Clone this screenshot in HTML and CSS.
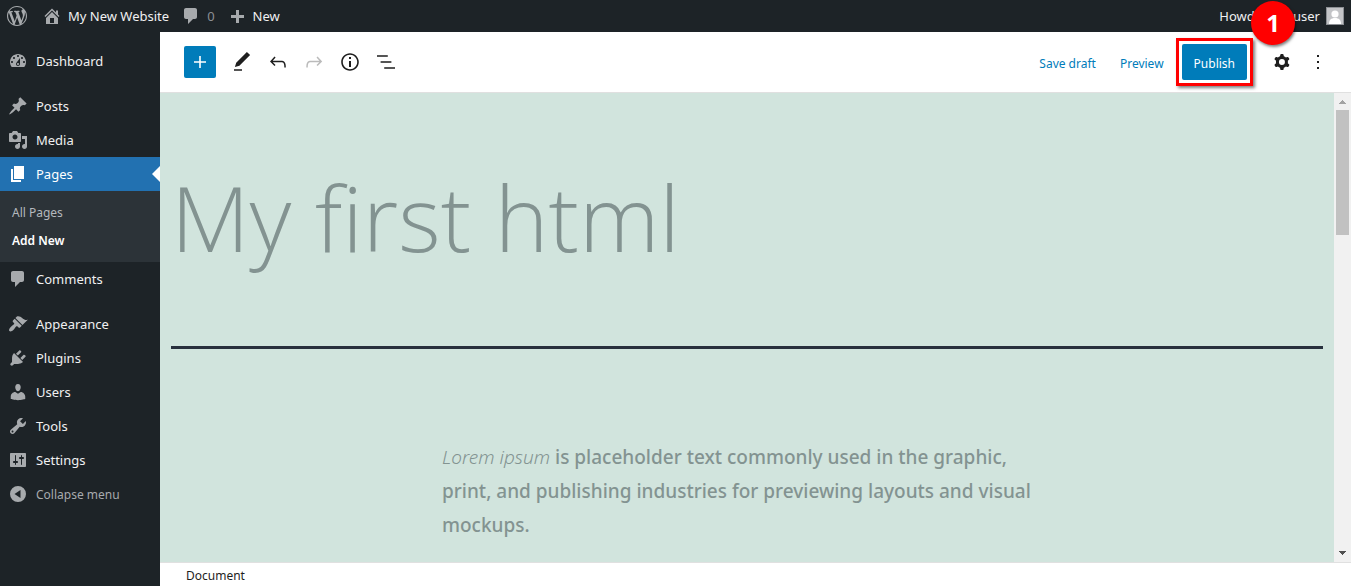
FILE: index.html
```
<!DOCTYPE html>
<html lang="en">
<head>
  <meta charset="UTF-8" />
  <meta name="viewport" content="width=device-width, initial-scale=1.0" />
  <title>Add New Page - My New Website</title>
  <link rel="stylesheet" href="styles.css">
</head>
<body>
  <header class="adminbar">
    <a href="#" class="bar-item" aria-label="About WordPress">
      <svg class="icon" viewBox="0 0 20 20"><path d="M20 10c0-5.51-4.49-10-10-10C4.48 0 0 4.49 0 10c0 5.52 4.48 10 10 10 5.51 0 10-4.48 10-10zM7.78 15.37L4.37 6.22c.55-.02 1.17-.08 1.17-.08.5-.06.44-1.13-.06-1.11 0 0-1.45.11-2.37.11-.18 0-.37 0-.58-.01C4.12 2.69 6.87 1.11 10 1.11c2.33 0 4.45.87 6.05 2.34-.68-.11-1.65.39-1.65 1.58 0 .74.45 1.36.9 2.1.35.61.55 1.36.55 2.46 0 1.49-1.4 5-1.4 5l-3.03-8.37c.54-.02.82-.17.82-.17.5-.05.44-1.25-.06-1.22 0 0-1.44.12-2.38.12-.87 0-2.33-.12-2.33-.12-.5-.03-.56 1.2-.06 1.22l.92.08 1.26 3.41zM17.41 10c.24-.64.74-1.87.43-4.25.7 1.29 1.05 2.71 1.05 4.25 0 3.29-1.73 6.24-4.4 7.78.97-2.59 1.94-5.2 2.92-7.78zM6.1 18.09C3.12 16.65 1.11 13.53 1.11 10c0-1.3.23-2.48.72-3.59C3.25 10.3 4.67 14.2 6.1 18.09zm4.03-6.63l2.58 6.98c-.86.29-1.76.45-2.71.45-.79 0-1.57-.11-2.29-.33.81-2.38 1.62-4.74 2.42-7.1z"/></svg>
    </a>
    <a href="#" class="bar-item">
      <svg class="icon" viewBox="0 0 20 20"><path d="M16 8.5l1.53 1.53-1.06 1.06L10 4.6l-6.47 6.49-1.06-1.06L10 2.5l4 4v-2h2v4zm-6-2.46l6 5.99V18H4v-5.97zM12 17v-5H8v5h4z"/></svg>
      My New Website
    </a>
    <a href="#" class="bar-item muted">
      <svg class="icon" viewBox="0 0 20 20"><path d="M5 2h9c1.1 0 2 .9 2 2v7c0 1.1-.9 2-2 2h-2l-5 5v-5H5c-1.1 0-2-.9-2-2V4c0-1.1.9-2 2-2z"/></svg>
      0
    </a>
    <a href="#" class="bar-item">
      <svg class="icon" viewBox="0 0 20 20"><path d="M17 9v3h-5v5H9v-5H4V9h5V4h3v5h5z"/></svg>
      New
    </a>
    <a href="#" class="bar-item account">
      Howdy, newuser
      <span class="avatar">
        <svg viewBox="0 0 16 16"><circle cx="8" cy="6" r="3.6"/><path d="M2 16c0-4 2-6 6-6s6 2 6 6z"/></svg>
      </span>
    </a>
  </header>

  <div class="layout">
    <nav class="sidebar">
      <a href="#" class="menu-item">
        <svg class="icon" viewBox="0 0 20 20"><path d="M3.76 16h12.48c1.1-1.37 1.76-3.11 1.76-5 0-4.42-3.58-8-8-8s-8 3.58-8 8c0 1.89.66 3.63 1.76 5zM10 4c.55 0 1 .45 1 1s-.45 1-1 1-1-.45-1-1 .45-1 1-1zM6 6c.55 0 1 .45 1 1s-.45 1-1 1-1-.45-1-1 .45-1 1-1zm8 0c.55 0 1 .45 1 1s-.45 1-1 1-1-.45-1-1 .45-1 1-1zm-5.37 5.55L12 7v6c0 1.1-.9 2-2 2s-2-.9-2-2c0-.57.24-1.08.63-1.45zM4 10c.55 0 1 .45 1 1s-.45 1-1 1-1-.45-1-1 .45-1 1-1zm12 0c.55 0 1 .45 1 1s-.45 1-1 1-1-.45-1-1 .45-1 1-1zm-5 3c0-.55-.45-1-1-1s-1 .45-1 1 .45 1 1 1 1-.45 1-1z"/></svg>
        Dashboard
      </a>
      <div class="separator"></div>
      <a href="#" class="menu-item">
        <svg class="icon" viewBox="0 0 20 20"><path d="M10.44 3.02l1.82-1.82 6.36 6.35-1.83 1.82c-1.05-.68-2.48-.57-3.41.36l-.75.75c-.92.93-1.04 2.35-.35 3.41l-1.83 1.82-2.41-2.41-2.8 2.79c-.42.42-3.38 2.71-3.8 2.29s1.86-3.39 2.28-3.81l2.79-2.79L4.1 9.36l1.83-1.82c1.05.69 2.48.57 3.4-.36l.75-.75c.93-.92 1.05-2.35.36-3.41z"/></svg>
        Posts
      </a>
      <a href="#" class="menu-item">
        <svg class="icon" viewBox="0 0 20 20"><path d="M13 11V4c0-.55-.45-1-1-1h-1.67L9 1H5L3.67 3H2c-.55 0-1 .45-1 1v7c0 .55.45 1 1 1h10c.55 0 1-.45 1-1zM7 4.5c1.38 0 2.5 1.12 2.5 2.5S8.38 9.5 7 9.5 4.5 8.38 4.5 7 5.62 4.5 7 4.5zM14 6h5v10.5c0 1.38-1.12 2.5-2.5 2.5S14 17.88 14 16.5s1.12-2.5 2.5-2.5c.17 0 .34.02.5.05V9h-3V6zm-4 8.05V13h2v3.5c0 1.38-1.12 2.5-2.5 2.5S7 17.88 7 16.5 8.12 14 9.5 14c.17 0 .34.02.5.05z"/></svg>
        Media
      </a>
      <a href="#" class="menu-item current">
        <svg class="icon" viewBox="0 0 20 20"><path d="M6 15V2h10v13H6zm-1 1h8v2H3V5h2v11z"/></svg>
        Pages
      </a>
      <div class="submenu">
        <a href="#">All Pages</a>
        <a href="#" class="active">Add New</a>
      </div>
      <a href="#" class="menu-item">
        <svg class="icon" viewBox="0 0 20 20"><path d="M5 2h9c1.1 0 2 .9 2 2v7c0 1.1-.9 2-2 2h-2l-5 5v-5H5c-1.1 0-2-.9-2-2V4c0-1.1.9-2 2-2z"/></svg>
        Comments
      </a>
      <div class="separator"></div>
      <a href="#" class="menu-item">
        <svg class="icon" viewBox="0 0 20 20"><path d="M14.48 11.06L7.41 3.99l1.5-1.5c.5-.56 2.3-.47 3.51.32 1.21.8 1.43 1.28 2.91 2.1 1.18.64 2.45 1.26 4.45.85zm-.71.71L6.7 4.7 4.93 6.47c-.39.39-.39 1.02 0 1.41l1.06 1.06c.39.39.39 1.03 0 1.42-.6.6-1.43 1.11-2.21 1.69-.35.26-.7.53-1.01.84C1.43 14.23.4 16.08 1.4 17.07c.99 1 2.84-.03 4.18-1.36.31-.31.58-.66.85-1.02.57-.78 1.08-1.61 1.69-2.21.39-.39 1.02-.39 1.41 0l1.06 1.06c.39.39 1.02.39 1.41 0z"/></svg>
        Appearance
      </a>
      <a href="#" class="menu-item">
        <svg class="icon" viewBox="0 0 20 20"><path d="M13.11 4.36L9.87 7.6 8 5.73l3.24-3.24c.35-.34 1.05-.2 1.56.32.52.51.66 1.21.31 1.55zm-8 1.77l.91-1.12 9.01 9.01-1.19.84c-.71.71-2.63 1.16-3.82 1.16H6.14L4.9 17.26c-.59.59-1.54.59-2.12 0-.59-.58-.59-1.53 0-2.12l1.24-1.24v-3.88c0-1.13.4-3.19 1.09-3.89zm7.26 3.97l3.24-3.24c.34-.35 1.04-.21 1.55.31.52.51.66 1.21.31 1.55l-3.24 3.25z"/></svg>
        Plugins
      </a>
      <a href="#" class="menu-item">
        <svg class="icon" viewBox="0 0 20 20"><path d="M10 9.25c-2.27 0-2.73-3.44-2.73-3.44C7 4.02 7.82 2 9.97 2c2.16 0 2.98 2.02 2.71 3.81 0 0-.41 3.44-2.68 3.44zm0 2.57L12.72 10c2.39 0 4.52 2.33 4.52 4.53v2.49s-3.65 1.13-7.24 1.13c-3.65 0-7.24-1.13-7.24-1.13v-2.49c0-2.25 1.94-4.48 4.47-4.48z"/></svg>
        Users
      </a>
      <a href="#" class="menu-item">
        <svg class="icon" viewBox="0 0 20 20"><path d="M16.68 9.77c-1.34 1.34-3.3 1.67-4.95.99l-5.41 6.52c-.99.99-2.59.99-3.58 0s-.99-2.59 0-3.57l6.52-5.42c-.68-1.65-.35-3.61.99-4.95 1.28-1.28 3.12-1.62 4.72-1.06l-2.89 2.89 2.82 2.82 2.86-2.87c.53 1.58.18 3.39-1.08 4.65zM3.81 16.21c.4.39 1.04.39 1.43 0 .4-.4.4-1.04 0-1.43-.39-.4-1.03-.4-1.43 0-.39.39-.39 1.03 0 1.43z"/></svg>
        Tools
      </a>
      <a href="#" class="menu-item">
        <svg class="icon" viewBox="0 0 20 20"><path d="M18 16V4c0-.55-.45-1-1-1H3c-.55 0-1 .45-1 1v12c0 .55.45 1 1 1h14c.55 0 1-.45 1-1zM8 11h1c.55 0 1 .45 1 1s-.45 1-1 1H8v1.5c0 .28-.22.5-.5.5s-.5-.22-.5-.5V13H6c-.55 0-1-.45-1-1s.45-1 1-1h1V5.5c0-.28.22-.5.5-.5s.5.22.5.5V11zm5-2h-1c-.55 0-1-.45-1-1s.45-1 1-1h1V5.5c0-.28.22-.5.5-.5s.5.22.5.5V7h1c.55 0 1 .45 1 1s-.45 1-1 1h-1v5.5c0 .28-.22.5-.5.5s-.5-.22-.5-.5V9z"/></svg>
        Settings
      </a>
      <button type="button" class="menu-item collapse">
        <svg class="icon" viewBox="0 0 20 20"><path fill-rule="evenodd" d="M10 2a8 8 0 1 0 0 16 8 8 0 0 0 0-16zM12.5 6v8L6.5 10z"/></svg>
        Collapse menu
      </button>
    </nav>

    <main class="editor">
      <div class="toolbar">
        <button type="button" class="inserter" aria-label="Add block">
          <svg viewBox="0 0 24 24"><path d="M18 11.2h-5.2V6h-1.6v5.2H6v1.6h5.2V18h1.6v-5.2H18z"/></svg>
        </button>
        <button type="button" class="tool" aria-label="Modes">
          <svg viewBox="0 0 24 24"><path d="M20.1 5.1L16.9 2 6.2 12.7l-1.3 4.4 4.5-1.3L20.1 5.1zM4 20.8h8v-1.5H4v1.5z"/></svg>
        </button>
        <button type="button" class="tool" aria-label="Undo">
          <svg viewBox="0 0 24 24"><path d="M18.3 11.7c-.6-.6-1.4-.9-2.3-.9H6.7l2.9-3.3-1.1-1-4.5 5L8.5 16l1-1-2.7-2.7H16c.5 0 .9.2 1.3.5 1 1 1 3.4 1 4.5v.3h1.5v-.2c0-1.5 0-4.3-1.5-5.7z"/></svg>
        </button>
        <button type="button" class="tool" aria-label="Redo" disabled>
          <svg viewBox="0 0 24 24"><path d="M15.6 6.5l-1.1 1 2.9 3.3H8c-.9 0-1.7.3-2.3.9-1.4 1.5-1.4 4.2-1.4 5.6v.2h1.5v-.3c0-1.1 0-3.5 1-4.5.3-.3.7-.5 1.3-.5h9.2L14.5 15l1.1 1.1 4.6-4.6-4.6-5z"/></svg>
        </button>
        <button type="button" class="tool" aria-label="Details">
          <svg viewBox="0 0 24 24"><path d="M12 3.2c-4.8 0-8.8 3.9-8.8 8.8 0 4.8 3.9 8.8 8.8 8.8 4.8 0 8.8-3.9 8.8-8.8 0-4.8-4-8.8-8.8-8.8zm0 16c-4 0-7.2-3.3-7.2-7.2C4.8 8 8 4.8 12 4.8s7.2 3.3 7.2 7.2c0 4-3.2 7.2-7.2 7.2zM11 17h2v-6h-2v6zm0-8h2V7h-2v2z"/></svg>
        </button>
        <button type="button" class="tool" aria-label="Outline">
          <svg viewBox="0 0 24 24"><path d="M13.8 5.2H3v1.5h10.8V5.2zm-3.6 12v1.5H21v-1.5H10.2zm7.2-6H6.6v1.5h10.8v-1.5z"/></svg>
        </button>
        <div class="actions">
          <button type="button" class="text-button">Save draft</button>
          <button type="button" class="text-button">Preview</button>
          <div class="highlight">
            <button type="button" class="publish">Publish</button>
            <span class="step">1</span>
          </div>
          <button type="button" class="tool" aria-label="Settings">
            <svg viewBox="0 0 24 24"><path fill-rule="evenodd" d="M10.289 4.836A1 1 0 0111.275 4h1.306a1 1 0 01.987.836l.244 1.466c.787.26 1.503.679 2.108 1.218l1.393-.522a1 1 0 011.216.437l.653 1.13a1 1 0 01-.23 1.273l-1.148.944a6.025 6.025 0 010 2.435l1.149.946a1 1 0 01.23 1.272l-.653 1.13a1 1 0 01-1.216.437l-1.394-.522c-.605.54-1.32.958-2.108 1.218l-.244 1.466a1 1 0 01-.987.836h-1.306a1 1 0 01-.986-.836l-.244-1.466a5.995 5.995 0 01-2.108-1.218l-1.394.522a1 1 0 01-1.217-.436l-.653-1.131a1 1 0 01.23-1.272l1.149-.946a6.026 6.026 0 010-2.435l-1.148-.944a1 1 0 01-.23-1.272l.653-1.131a1 1 0 011.217-.437l1.393.522a5.994 5.994 0 012.108-1.218l.244-1.466zM14.929 12a3 3 0 11-6 0 3 3 0 016 0z"/></svg>
          </button>
          <button type="button" class="tool" aria-label="Options">
            <svg viewBox="0 0 24 24"><path d="M13 19h-2v-2h2v2zm0-6h-2v-2h2v2zm0-6h-2V5h2v2z"/></svg>
          </button>
        </div>
      </div>

      <div class="canvas">
        <article class="page">
          <h1>My first html</h1>
          <p><em>Lorem ipsum</em> is placeholder text commonly used in the graphic, print, and publishing industries for previewing layouts and visual mockups.</p>
        </article>
        <div class="scrollbar">
          <svg class="arrow up" viewBox="0 0 7 4"><path d="M3 0h1v1h1v1h1v1h1v1H0V3h1V2h1V1h1z"/></svg>
          <div class="thumb"></div>
          <svg class="arrow down" viewBox="0 0 7 4"><path d="M0 0h7v1H6v1H5v1H4v1H3V3H2V2H1V1H0z"/></svg>
        </div>
      </div>

      <footer class="breadcrumb">Document</footer>
    </main>
  </div>
</body>
</html>
```
FILE: styles.css
```
* {
  box-sizing: border-box;
}

body {
  display: flex;
  flex-direction: column;
  height: 100vh;
  margin: 0;
  overflow: hidden;
  font-family: "Noto Sans", "Open Sans", sans-serif;
  font-size: 13px;
  color: #1e1e1e;
  background-color: #fff;
}

a {
  color: inherit;
  text-decoration: none;
}

button {
  border: 0;
  padding: 0;
  background: none;
  font: inherit;
  color: inherit;
  cursor: pointer;
}

svg {
  display: block;
  fill: currentColor;
}

.icon {
  width: 20px;
  height: 20px;
  flex: none;
  color: #a7aaad;
}

/* top bar */
.adminbar {
  display: flex;
  flex: none;
  height: 32px;
  padding: 0 7px;
  gap: 12px;
  background-color: #1d2327;
  color: #f0f0f1;
}

.bar-item {
  display: flex;
  align-items: center;
  gap: 6px;
}

.bar-item:first-child {
  margin-right: 3px;
}

.muted {
  color: #8c8f94;
}

.account {
  margin-left: auto;
}

.avatar {
  width: 18px;
  height: 18px;
  border: 1px solid #8c8f94;
  background-color: #c3c4c7;
  color: #fff;
}

.layout {
  display: flex;
  flex: 1;
  min-height: 0;
}

/* left menu */
.sidebar {
  flex: none;
  width: 160px;
  padding-top: 12px;
  background-color: #1d2327;
  color: #f0f0f1;
}

.menu-item {
  display: flex;
  align-items: center;
  position: relative;
  width: 100%;
  height: 34px;
  padding-left: 8px;
  gap: 8px;
}

.separator {
  height: 11px;
}

.current {
  background-color: #2271b1;
  color: #fff;
}

.current .icon {
  color: #fff;
}

.current::after {
  content: "";
  position: absolute;
  right: 0;
  border: 8px solid transparent;
  border-left-width: 0;
  border-right-color: #fff;
}

.submenu {
  padding: 8px 12px 7px;
  background-color: #2c3338;
  color: #b4b9be;
}

.submenu a {
  display: block;
  font-size: 12px;
  line-height: 28px;
}

.submenu .active {
  color: #fff;
  font-weight: 600;
}

.collapse {
  color: #a7aaad;
  font-size: 12px;
}

/* editor */
.editor {
  display: flex;
  flex: 1;
  flex-direction: column;
  min-width: 0;
}

.toolbar {
  display: flex;
  flex: none;
  align-items: center;
  height: 61px;
  padding: 0 15px 0 24px;
  border-bottom: 1px solid #e0e0e0;
}

.inserter {
  width: 32px;
  height: 32px;
  margin-right: 8px;
  padding: 4px;
  border-radius: 2px;
  background-color: #007cba;
  color: #fff;
}

.tool {
  width: 36px;
  height: 36px;
  padding: 6px;
}

.tool:disabled {
  color: #bbb;
}

.actions {
  display: flex;
  align-items: center;
  margin-left: auto;
}

.text-button {
  margin-right: 24px;
  padding-top: 2px;
  color: #007cba;
  font-size: 12px;
}

.text-button + .text-button {
  margin-right: 12px;
}

.highlight {
  position: relative;
  margin-right: 11px;
  padding: 3px;
  border: 3px solid #f00;
  box-shadow: 2px 2px 3px rgba(0, 0, 0, 0.5);
}

.publish {
  display: block;
  height: 36px;
  padding: 2px 12px 0;
  border-radius: 2px;
  background-color: #007cba;
  color: #fff;
  font-size: 12px;
}

/* numbered marker on the corner of the frame */
.step {
  position: absolute;
  right: -45px;
  top: -40px;
  width: 44px;
  height: 44px;
  border-radius: 50%;
  background-color: #f00;
  box-shadow: 1px 2px 3px rgba(0, 0, 0, 0.5);
  color: #fff;
  font-size: 24px;
  font-weight: 700;
  line-height: 44px;
  text-align: center;
}

.canvas {
  display: flex;
  flex: 1;
  min-height: 0;
  background-color: #d1e4dd;
}

.page {
  flex: 1;
  padding: 60px 11px 0;
  overflow: hidden;
  color: #839391;
}

.page h1 {
  margin: 0 0 91px;
  padding-bottom: 65px;
  border-bottom: 3px solid #28303d;
  font-family: "Open Sans", "Noto Sans", sans-serif;
  font-size: 91px;
  font-weight: 300;
  line-height: 128px;
}

.page p {
  max-width: 610px;
  margin: 0 auto;
  font-size: 19px;
  font-weight: 500;
  line-height: 34px;
}

.page em {
  font-weight: 300;
}

.scrollbar {
  display: flex;
  flex: none;
  flex-direction: column;
  align-items: center;
  width: 17px;
  background-color: #f1f1f1;
}

.arrow {
  width: 7px;
  height: 4px;
  flex: none;
}

.up {
  margin: 7px 0 6px;
  color: #a3a3a3;
}

.down {
  margin: auto 0 7px;
  color: #505050;
}

.thumb {
  width: 13px;
  height: 125px;
  background-color: #c1c1c1;
}

.breadcrumb {
  flex: none;
  height: 24px;
  padding-left: 26px;
  border-top: 1px solid #e0e0e0;
  font-size: 12px;
  line-height: 25px;
}
```
